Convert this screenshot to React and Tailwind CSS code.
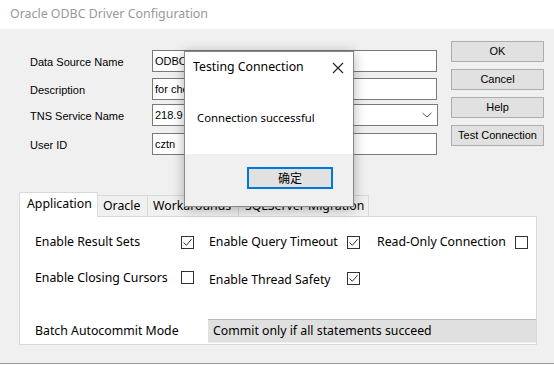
import React from 'react';

const sans = { fontFamily: '"Liberation Sans", Arial, sans-serif' };

function Check({ on }) {
  return (
    <span className="w-[13px] h-[13px] border border-[#333] bg-white flex items-center justify-center shrink-0">
      {on && (
        <svg width="11" height="11" viewBox="0 0 11 11">
          <path d="M1.5 5.5 L4.3 8.3 L9.6 2.2" fill="none" stroke="#333" strokeWidth="1" />
        </svg>
      )}
    </span>
  );
}

function Field({ label, value, combo, mt }) {
  return (
    <div className={`flex items-center ${mt}`}>
      <span className="w-[122px] pl-[30px] pt-[2px] box-content text-[11px] text-black">{label}</span>
      <div
        className={`h-[22px] ${combo ? 'w-[286px]' : 'w-[285px]'} border border-[#7a7a7a] bg-white flex items-center pl-[2px] text-[11px] text-black justify-between`}
      >
        <span>{value}</span>
        {combo && (
          <svg width="12" height="8" viewBox="0 0 12 8" className="mr-[4px]">
            <path d="M1.5 2 L6 6 L10.5 2" fill="none" stroke="#555" strokeWidth="1" />
          </svg>
        )}
      </div>
    </div>
  );
}

function Btn({ children }) {
  return (
    <div className="h-[21px] w-[93px] bg-[#e1e1e1] border border-[#adadad] flex items-center justify-center text-[11px] text-black">
      {children}
    </div>
  );
}

export default function App() {
  return (
    <div className="w-[554px] h-[366px] bg-white relative overflow-hidden" style={{ fontFamily: '"Noto Sans", "Open Sans", sans-serif' }}>
      {/* title bar */}
      <div className="h-[29px] pl-[10px] flex items-center text-[12.4px] text-[#999]">Oracle ODBC Driver Configuration</div>

      {/* body */}
      <div className="h-[335px] bg-[#f0f0f0] border-b border-[#9a9a9a] flex flex-col">
        <div className="flex" style={sans}>
          <div className="w-[451px] pt-[21px] flex flex-col">
            <Field label="Data Source Name" value="ODBC" mt="" />
            <Field label="Description" value="for che" mt="mt-[6px]" />
            <Field label="TNS Service Name" value="218.9" combo mt="mt-[4px]" />
            <Field label="User ID" value="cztn" mt="mt-[7px]" />
          </div>
          <div className="pt-[12px] flex flex-col gap-[7px]">
            <Btn>OK</Btn>
            <Btn>Cancel</Btn>
            <Btn>Help</Btn>
            <Btn>Test Connection</Btn>
          </div>
        </div>

        {/* tabs */}
        <div className="mt-[37px] ml-[19px] flex items-end h-[24px] text-[12.3px] whitespace-nowrap">
          <div className="h-[25px] w-[79px] bg-white border border-b-0 border-[#d9d9d9] pl-[7px] pt-[2px] text-black relative z-10 -mb-px">Application</div>
          <div className="h-[21px] w-[50px] border border-l-0 border-b-0 border-[#d9d9d9] pl-[5px] flex items-center text-black">Oracle</div>
          <div className="h-[21px] w-[91px] border border-l-0 border-b-0 border-[#d9d9d9] pl-[5px] flex items-center text-black">Workarounds</div>
          <div className="h-[21px] w-[130px] border border-l-0 border-b-0 border-[#d9d9d9] pl-[6px] flex items-center text-black">SQLServer Migration</div>
        </div>

        {/* panel */}
        <div className="ml-[19px] w-[518px] h-[129px] bg-white border border-[#d9d9d9] flex flex-col text-[12.3px] text-black whitespace-nowrap">
          <div className="flex items-center mt-[18px] h-[14px]">
            <span className="w-[146px] pl-[15px] box-content">Enable Result Sets</span>
            <Check on />
            <span className="w-[138px] ml-[15px]">Enable Query Timeout</span>
            <Check on />
            <span className="w-[138px] ml-[17px]">Read-Only Connection</span>
            <Check />
          </div>
          <div className="flex items-start mt-[22px] h-[16px]">
            <span className="w-[146px] pl-[15px] box-content leading-[14px]">Enable Closing Cursors</span>
            <Check />
            <span className="w-[138px] ml-[15px] mt-[2px] leading-[14px]">Enable Thread Safety</span>
            <span className="mt-[1px]"><Check on /></span>
          </div>
          <div className="flex items-center mt-[32px]">
            <span className="w-[173px] pl-[15px] box-content">Batch Autocommit Mode</span>
            <div className="h-[24px] w-[328px] bg-[#e0e0e0] border-t border-[#b9b9b9] border-b border-b-[#f0f0f0] pl-[5px] flex items-center">
              Commit only if all statements succeed
            </div>
          </div>
        </div>
      </div>

      {/* modal */}
      <div className="absolute left-[184px] top-[51px] w-[170px] h-[156px] border border-[#888] bg-white shadow-[0_2px_12px_rgba(0,0,0,0.3)] flex flex-col">
        <div className="h-[102px] flex flex-col">
          <div className="flex items-center justify-between h-[31px] pl-[8px] pr-[9px] text-[12.3px] text-black">
            <span>Testing Connection</span>
            <svg width="12" height="12" viewBox="0 0 12 12">
              <path d="M1 1 L11 11 M11 1 L1 11" stroke="#222" strokeWidth="1.1" />
            </svg>
          </div>
          <div className="pl-[12px] mt-[27px] text-[11.3px] text-black">Connection successful</div>
        </div>
        <div className="flex-1 bg-[#f0f0f0] flex justify-end pr-[20px] pt-[13px]">
          <div className="w-[86px] h-[22px] border-2 border-[#0078d7] bg-[#e1e1e1] flex items-center justify-center text-[12px] text-black" style={{ fontFamily: '"Noto Sans CJK SC", sans-serif' }}>
            确定
          </div>
        </div>
      </div>
    </div>
  );
}
